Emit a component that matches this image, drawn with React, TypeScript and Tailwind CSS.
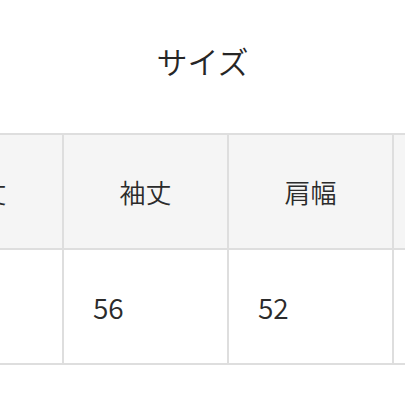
import React from "react";

const headers = ["着丈", "袖丈", "肩幅", "身幅"];
const values = ["70", "56", "52", "58"];

export default function App() {
  return (
    <div
      className="w-[405px] h-[405px] overflow-hidden bg-white text-[#2b2b2b] font-[350]"
      style={{ fontFamily: '"Noto Sans CJK JP", "Noto Sans", sans-serif' }}
    >
      <div className="h-[133px] pt-[41px] text-center text-[31px] leading-[40px] text-[#262626]">
        サイズ
      </div>
      <div className="-ml-[103px] w-max">
        <div className="grid grid-cols-[repeat(4,163px)] grid-rows-[113px_113px] gap-[2px] p-[2px] bg-[#dedede]">
          {headers.map((h) => (
            <div
              key={h}
              className="bg-[#f5f5f5] flex items-center justify-center text-[26px] text-[#2b2b2b]"
            >
              {h}
            </div>
          ))}
          {values.map((v, i) => (
            <div
              key={i}
              className="bg-white flex items-center pl-[29px] text-[28px] text-[#2b2b2b]"
            >
              {v}
            </div>
          ))}
        </div>
      </div>
    </div>
  );
}
